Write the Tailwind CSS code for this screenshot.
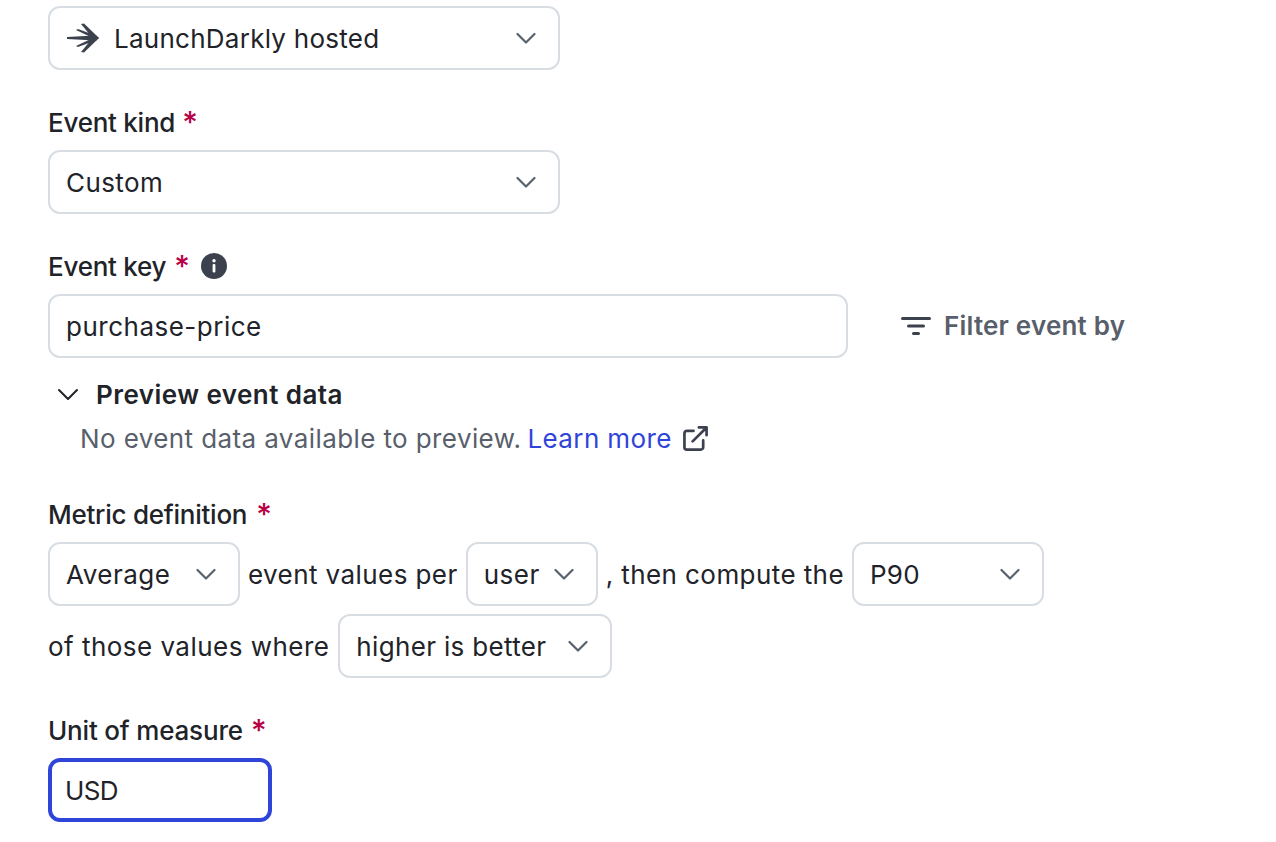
<!DOCTYPE html>
<html lang="en">
  <head>
    <meta charset="UTF-8" />
    <title>Metric</title>
    <script src="https://cdn.jsdelivr.net/npm/@tailwindcss/browser@4"></script>
  </head>
  <body class="bg-white text-[#212329] font-['Inter',sans-serif] text-[26px] leading-[32px] tracking-[0.42px] h-[842px] overflow-hidden">
    <form class="flex flex-col pt-[6px] px-12">
      <div class="flex items-center justify-between w-[512px] h-16 pl-[17px] pr-[22px] border-2 border-[#d8dde3] rounded-xl">
        <span class="flex items-center gap-[15px] tracking-[0.26px]">
          <svg class="w-[32px] h-[30px]" viewBox="0 0 32 30" fill="#3b424d">
            <path d="M14 1 17 0.500 32 15 28 18Z" />
            <path d="M14 29 17 29.500 32 15 28 12Z" />
            <path d="M0 14 28 12.500 30 15 28 17.500 0 16Z" />
            <path d="M9 7 11 6 30 13 28 16Z" />
            <path d="M9 23 11 24 30 17 28 14Z" />
          </svg>
          <span class="translate-y-px">LaunchDarkly hosted</span>
        </span>
        <svg class="w-5 h-5" viewBox="0 0 20 20" fill="none" stroke="#59616d" stroke-width="2.200" stroke-linecap="round" stroke-linejoin="round"><path d="M1.500 6l8.500 8.500L18.500 6" /></svg>
      </div>

      <label class="mt-[37px] mb-[11px] flex items-center gap-[7px] font-medium tracking-[-0.25px]">Event kind <span class="text-[30px] -mt-[2px] text-[#b80045]">*</span></label>
      <div class="flex items-center justify-between w-[512px] h-16 pl-[16px] pr-[22px] border-2 border-[#d8dde3] rounded-xl">
        <span class="translate-y-px">Custom</span>
        <svg class="w-5 h-5" viewBox="0 0 20 20" fill="none" stroke="#59616d" stroke-width="2.200" stroke-linecap="round" stroke-linejoin="round"><path d="M1.500 6l8.500 8.500L18.500 6" /></svg>
      </div>

      <label class="mt-[37px] mb-[11px] flex items-center gap-2 font-medium tracking-[-0.25px]">
        Event key <span class="text-[30px] -mt-[2px] text-[#b80045]">*</span>
        <svg class="w-[26px] h-[26px] ml-[3px] -translate-y-px" viewBox="0 0 26 26"><circle cx="13" cy="13" r="13" fill="#3b424d" /><rect x="11.600" y="11" width="2.800" height="8.500" rx="1" fill="#fff" /><circle cx="13" cy="7.800" r="1.700" fill="#fff" /></svg>
      </label>
      <div class="flex items-center">
        <div class="flex items-center w-[800px] h-16 pl-[16px] border-2 border-[#d8dde3] rounded-xl tracking-[0.5px]"><span class="translate-y-px">purchase-price</span></div>
        <button type="button" class="flex items-center gap-[13px] ml-[53px] font-semibold text-[#585f6b] tracking-[0.2px]">
          <svg class="w-[30px] h-[20px]" viewBox="0 0 30 20" fill="#3b424d"><rect y="1" width="30" height="3" rx="1.500" /><rect x="6" y="8.500" width="18" height="3" rx="1.500" /><rect x="11" y="16" width="8" height="3" rx="1.500" /></svg>
          <span>Filter event by</span>
        </button>
      </div>

      <div class="flex items-center gap-[18px] mt-5 pl-[10px] font-semibold tracking-[0.45px]">
        <svg class="w-5 h-5" viewBox="0 0 20 20" fill="none" stroke="#212329" stroke-width="2" stroke-linecap="round" stroke-linejoin="round"><path d="M1 6l9 9 9-9" /></svg>
        <span class="translate-y-px">Preview event data</span>
      </div>
      <p class="flex items-center mt-3 pl-8 text-[#585f6b] tracking-[0.4px]">
        <span class="translate-y-px">No event data available to preview.</span>
        <a class="ml-[6px] translate-y-px text-[#2f45d9]" href="#">Learn more</a>
        <svg class="w-[25px] h-[25px] ml-[11px]" viewBox="0 0 26 26" fill="none" stroke="#3b424d" stroke-width="2.800" stroke-linecap="round" stroke-linejoin="round"><path d="M11 5H4a2.500 2.500 0 0 0-2.500 2.500V22A2.500 2.500 0 0 0 4 24.500h14.500A2.500 2.500 0 0 0 21 22v-7" /><path d="M10 16 24.500 1.500M16.500 1.500h8v8" /></svg>
      </p>

      <label class="mt-[45px] mb-[11px] flex items-center gap-[9px] font-medium tracking-[-0.25px]">Metric definition <span class="text-[30px] -mt-[2px] text-[#b80045]">*</span></label>
      <div class="flex items-center">
        <div class="flex items-center justify-between w-[192px] h-16 pl-[16px] pr-[22px] border-2 border-[#d8dde3] rounded-xl tracking-[0.5px]">
          <span class="translate-y-px">Average</span>
          <svg class="w-5 h-5" viewBox="0 0 20 20" fill="none" stroke="#59616d" stroke-width="2.200" stroke-linecap="round" stroke-linejoin="round"><path d="M1.500 6l8.500 8.500L18.500 6" /></svg>
        </div>
        <span class="ml-2 translate-y-px">event values per</span>
        <div class="flex items-center justify-between w-[132px] h-16 ml-2 pl-[16px] pr-[22px] border-2 border-[#d8dde3] rounded-xl tracking-[0.5px]">
          <span class="translate-y-px">user</span>
          <svg class="w-5 h-5" viewBox="0 0 20 20" fill="none" stroke="#59616d" stroke-width="2.200" stroke-linecap="round" stroke-linejoin="round"><path d="M1.500 6l8.500 8.500L18.500 6" /></svg>
        </div>
        <span class="ml-2 translate-y-px">, then compute the</span>
        <div class="flex items-center justify-between w-[192px] h-16 ml-2 pl-[16px] pr-[22px] border-2 border-[#d8dde3] rounded-xl tracking-[0.2px]">
          <span class="translate-y-px">P90</span>
          <svg class="w-5 h-5" viewBox="0 0 20 20" fill="none" stroke="#59616d" stroke-width="2.200" stroke-linecap="round" stroke-linejoin="round"><path d="M1.500 6l8.500 8.500L18.500 6" /></svg>
        </div>
      </div>
      <div class="flex items-center mt-2">
        <span class="translate-y-px tracking-[0.47px]">of those values where</span>
        <div class="flex items-center justify-between w-[274px] h-16 ml-[9px] pl-[16px] pr-[22px] border-2 border-[#d8dde3] rounded-xl tracking-[0.33px]">
          <span class="translate-y-px">higher is better</span>
          <svg class="w-5 h-5" viewBox="0 0 20 20" fill="none" stroke="#59616d" stroke-width="2.200" stroke-linecap="round" stroke-linejoin="round"><path d="M1.500 6l8.500 8.500L18.500 6" /></svg>
        </div>
      </div>

      <label class="mt-[37px] mb-[11px] flex items-center gap-2 font-medium tracking-[-0.18px]">Unit of measure <span class="text-[30px] -mt-[2px] text-[#b80045]">*</span></label>
      <div class="flex items-center w-[224px] h-16 pl-[13px] border-4 border-[#2f45d9] rounded-xl tracking-[-0.7px]"><span class="translate-y-px">USD</span></div>
    </form>
  </body>
</html>
